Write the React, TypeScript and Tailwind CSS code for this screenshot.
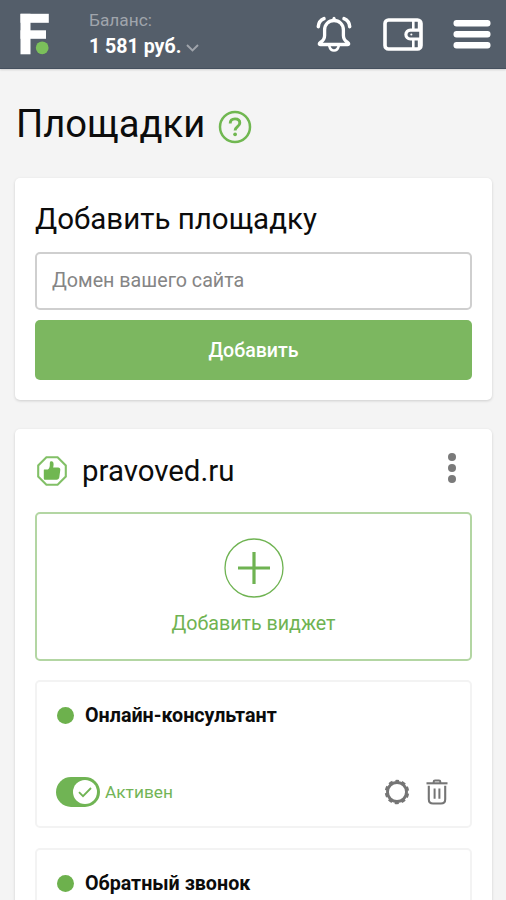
import { useState } from 'react'

const WIDGETS = [
  { id: 'consultant', title: 'Онлайн-консультант', hasControls: true },
  { id: 'callback', title: 'Обратный звонок', hasControls: false },
]

function Logo() {
  return (
    <svg width="30" height="42" viewBox="0 0 30 42" className="shrink-0">
      <g fill="#fff">
        <rect x="0.5" y="0.8" width="10" height="40.5" />
        <rect x="0.5" y="0.8" width="28.3" height="9" />
        <rect x="0.5" y="17.3" width="25.5" height="8.5" />
      </g>
      <circle cx="22.2" cy="34.8" r="6.9" fill="#545e6a" />
      <circle cx="22.2" cy="34.8" r="6.4" fill="#7bc05b" />
    </svg>
  )
}

function BellIcon() {
  return (
    <svg width="37" height="37" viewBox="0 0 37 37" fill="none" stroke="#fff" strokeLinecap="round" strokeLinejoin="round">
      <path strokeWidth="3.3" d="M18 4.500c-5.300 0-9.400 3.800-9.400 9.500v5.500c0 3.200-1.200 4.900-3.900 6.600-1.900 1.300-1.700 2.400-.2 2.400h27c1.500 0 1.700-1.100-.2-2.400-2.700-1.700-3.900-3.400-3.900-6.600V14c0-5.700-4.100-9.500-9.400-9.500Z" />
      <path strokeWidth="3" d="M18 2.300v1.500" />
      <path strokeWidth="2.600" d="M13.300 30c.7 3 2.300 4.500 4.700 4.500s4-1.500 4.700-4.500" />
      <path strokeWidth="3.500" d="M8 2.600C4.600 4 2.500 7 2.300 10.700M28 2.600c3.400 1.400 5.500 4.400 5.700 8.100" />
    </svg>
  )
}

function WalletIcon() {
  return (
    <svg width="40" height="33" viewBox="0 0 40 33" fill="none" stroke="#fff">
      <rect x="2" y="2" width="36" height="29" rx="3.500" strokeWidth="3.600" />
      <path strokeWidth="2.600" d="M30.300 3v8M30.300 22V30" />
      <path strokeWidth="2" d="M35.800 3v8M35.800 22V30" />
      <path strokeWidth="3.200" strokeLinejoin="round" d="M37.500 12.200H27.300a4.400 4.400 0 0 0 0 8.800h10.200" />
      <path strokeWidth="2" strokeLinecap="round" d="M28.300 16.600h.1" />
    </svg>
  )
}

function MenuIcon() {
  return (
    <svg width="38" height="29" viewBox="0 0 38 29" fill="#fff">
      <rect x="0.500" y="0" width="37" height="6.500" rx="3" />
      <rect x="0.500" y="11" width="37" height="6.500" rx="3" />
      <rect x="0.500" y="22" width="37" height="6.500" rx="3" />
    </svg>
  )
}

function ThumbBadge() {
  return (
    <svg width="32" height="32" viewBox="0 0 32 32" className="shrink-0">
      <path d="M10.400 2.200h11.200l8.200 8.200v11.200l-8.200 8.200H10.400l-8.200-8.200V10.400Z" fill="none" stroke="#82c067" strokeWidth="2.100" />
      <path
        d="M8.300 14.500h3.600c1.800-1.300 2-3.300 1.900-6 0-1.600.6-2.200 1.600-2.200 1.500 0 2.200 1.200 2.200 3 0 1.300-.2 2.300-.5 3.200h5c1.600 0 2.400 1 2.200 2.500l-1 7.200c-.2 1.600-1.200 2.500-2.700 2.500H9.300c-1 0-1.500-.5-1.500-1.500v-7.300c0-.9.100-1.400.5-1.400Z"
        fill="#70b751"
      />
    </svg>
  )
}

function GearIcon() {
  return (
    <svg width="26" height="26" viewBox="0 0 26 26" fill="none" stroke="#757575">
      <circle cx="13" cy="13" r="9.500" strokeWidth="2.900" />
      <circle cx="13" cy="13" r="11" strokeWidth="2.400" strokeDasharray="4 2.912" strokeDashoffset="2" transform="rotate(-90 13 13)" />
    </svg>
  )
}

function TrashIcon() {
  return (
    <svg width="22" height="26" viewBox="0 0 22 26" fill="none" stroke="#757575">
      <path strokeWidth="2.100" d="M0.500 4.300h21" />
      <path strokeWidth="2" d="M7.700 4V2.800c0-.9.500-1.300 1.300-1.300h4c.8 0 1.300.4 1.300 1.300V4" />
      <path strokeWidth="2.100" d="M2.800 6.700v13.500c0 2.800 1.500 4.300 4.200 4.300h8c2.700 0 4.200-1.500 4.200-4.300V6.700" />
      <path strokeWidth="2" d="M8.600 9.500v10.300M13.400 9.500v10.300" />
    </svg>
  )
}

function Toggle({ checked, onChange }: { checked: boolean; onChange: () => void }) {
  return (
    <button
      type="button"
      role="switch"
      aria-checked={checked}
      onClick={onChange}
      className={`flex h-[30px] w-[44px] items-center rounded-full px-[3px] ${checked ? 'justify-end bg-[#70b454]' : 'justify-start bg-gray-300'}`}
    >
      <span className="flex size-6 items-center justify-center rounded-full bg-white">
        <svg width="14" height="11" viewBox="0 0 14 11" fill="none" stroke="#70b454" strokeWidth="1.800">
          <path d="M1 5.200l4 4L13 1" />
        </svg>
      </span>
    </button>
  )
}

function WidgetCard({ title, hasControls }: { title: string; hasControls: boolean }) {
  const [active, setActive] = useState(true)

  return (
    <div className="flex h-[148px] shrink-0 flex-col justify-between rounded-[5px] border-2 border-[#f3f3f3] pt-[19px] pr-[22px] pb-[19px] pl-[19px]">
      <div className="flex h-[29px] items-center">
        <span className="mr-[11px] ml-px size-[17px] rounded-full bg-[#6db14d]" />
        <h3 className="text-[19.7px] leading-7 font-bold">{title}</h3>
      </div>
      {hasControls && (
        <div className="flex h-[30px] items-center">
          <Toggle checked={active} onChange={() => setActive(!active)} />
          <span className="mt-px ml-[5px] text-[17.3px] text-[#72b456]">{active ? 'Активен' : 'Отключен'}</span>
          <div className="ml-auto flex items-center gap-4">
            <button type="button" aria-label="Настройки">
              <GearIcon />
            </button>
            <button type="button" aria-label="Удалить">
              <TrashIcon />
            </button>
          </div>
        </div>
      )}
    </div>
  )
}

export default function App() {
  const [domain, setDomain] = useState('')

  return (
    <div className="flex h-[900px] w-[506px] flex-col overflow-hidden bg-[#f4f4f4] font-['Roboto',sans-serif] text-[#0c0c0c]">
      <header className="flex h-[69px] shrink-0 items-center border-b border-[#45505e] bg-[#545e6a] pr-[15px] pl-[20px] shadow-[0_1px_2px_rgba(0,0,0,0.15)]">
        <Logo />
        <div className="mb-px ml-[39px] flex flex-col">
          <span className="mb-[2px] text-[17.3px] leading-6 text-[#a0a5ac]">Баланс:</span>
          <span className="flex items-center text-[19.6px] leading-[26px] font-bold text-white">
            1 581 руб.
            <svg width="13" height="8" viewBox="0 0 13 8" className="mt-[2px] ml-[5px]" fill="none" stroke="#a0a5ac" strokeWidth="1.900">
              <path d="M1 1l5.500 5.500L12 1" />
            </svg>
          </span>
        </div>
        <div className="ml-auto flex items-center">
          <BellIcon />
          <div className="mr-[30px] ml-[30px]">
            <WalletIcon />
          </div>
          <MenuIcon />
        </div>
      </header>

      <main className="flex flex-col px-[15px]">
        <div className="flex h-[109px] items-center">
          <h1 className="ml-px text-[38.200px] leading-[48px]">Площадки</h1>
          <svg width="34" height="34" viewBox="0 0 34 34" className="mt-[7px] ml-[13px]" fill="none" stroke="#70b751">
            <circle cx="17" cy="17" r="15" strokeWidth="2.500" />
            <path strokeWidth="2.900" d="M12.200 13.500c0-2.900 1.900-4.600 4.800-4.600s4.800 1.600 4.800 4.100c0 3.700-4.700 3.600-4.700 7.500" />
            <circle cx="17.100" cy="24.300" r="1.900" fill="#70b751" stroke="none" />
          </svg>
        </div>

        <section className="flex h-[222px] w-[477px] flex-col rounded-[5px] bg-white px-5 shadow-[0_1px_3px_rgba(0,0,0,0.16)]">
          <h2 className="mt-[21px] text-[29.500px] leading-10">Добавить площадку</h2>
          <input
            value={domain}
            onChange={(e) => setDomain(e.target.value)}
            placeholder="Домен вашего сайта"
            className="mt-[13px] h-[58px] w-full rounded-[5px] border-2 border-[#cfcfcf] px-[15px] pb-[2px] text-[19.700px] placeholder:text-[#858585]"
          />
          <button type="button" className="mt-[10px] h-[60px] w-full rounded-[5px] bg-[#7cb760] pt-px text-[19.600px] font-medium text-white">
            Добавить
          </button>
        </section>

        <section className="mt-[29px] flex h-[620px] w-[477px] flex-col rounded-[5px] bg-white px-5 shadow-[0_1px_3px_rgba(0,0,0,0.16)]">
          <div className="flex h-[83px] shrink-0 items-center">
            <span className="mt-px ml-px">
              <ThumbBadge />
            </span>
            <h2 className="ml-[14px] text-[29.400px] leading-10">pravoved.ru</h2>
            <button type="button" aria-label="Меню" className="mr-4 mb-[5px] ml-auto flex flex-col gap-[3px]">
              <span className="size-2 rounded-full bg-[#7a7a7a]" />
              <span className="size-2 rounded-full bg-[#7a7a7a]" />
              <span className="size-2 rounded-full bg-[#7a7a7a]" />
            </button>
          </div>
          <button
            type="button"
            className="flex h-[149px] shrink-0 flex-col items-center rounded-[5px] border-2 border-[#b3d6a3] pt-[24px] text-[#6fb352]"
          >
            <svg width="60" height="60" viewBox="0 0 60 60" fill="none" stroke="#6fb352">
              <circle cx="30" cy="30" r="29" strokeWidth="1.300" />
              <path strokeWidth="3.200" d="M30 14v32M14 30h32" />
            </svg>
            <span className="mt-3 text-[19.650px] leading-7">Добавить виджет</span>
          </button>
          <div className="mt-[19px] flex flex-col gap-5">
            {WIDGETS.map((widget) => (
              <WidgetCard key={widget.id} title={widget.title} hasControls={widget.hasControls} />
            ))}
          </div>
        </section>
      </main>
    </div>
  )
}
